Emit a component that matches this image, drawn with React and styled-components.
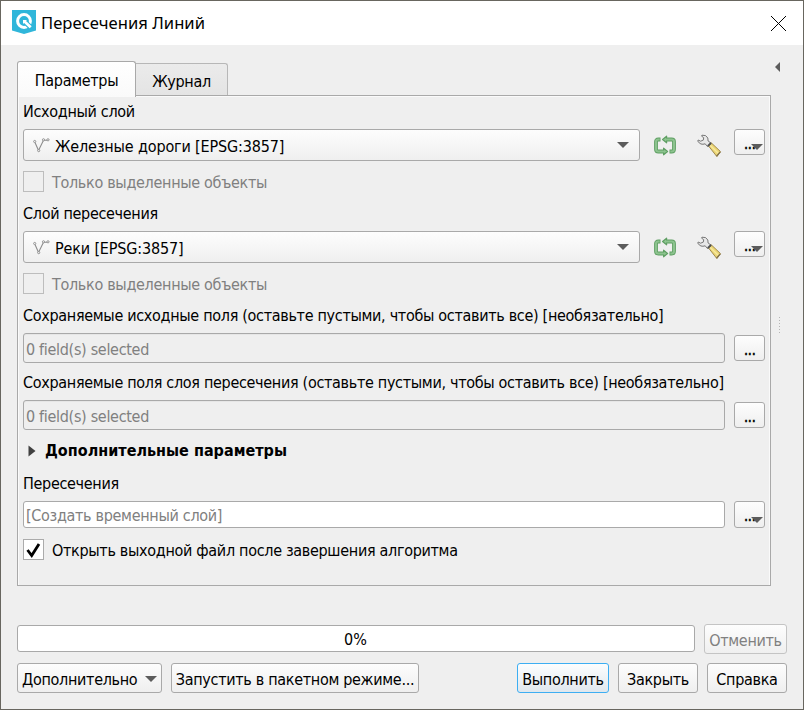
import React from 'react';
import styled, { createGlobalStyle } from 'styled-components';

const Global = createGlobalStyle`
  *, *::before, *::after { box-sizing: border-box; }
  body { margin: 0; }
  button { margin: 0; padding: 0; color: inherit; font: inherit; letter-spacing: inherit; }
`;

const Window = styled.div`
  display: flex;
  flex-direction: column;
  width: 804px;
  height: 710px;
  overflow: hidden;
  border: 1px solid #68665f;
  background: #efefef;
  color: #000;
  font: 16px/20px "DejaVu Sans Condensed", "DejaVu Sans", sans-serif;
  letter-spacing: -0.31px;
`;

const TitleBar = styled.header`
  display: flex;
  align-items: center;
  flex: none;
  height: 44px;
  padding: 0 16px 0 11px;
  background: #fff;
`;

const Logo = styled.svg`
  flex: none;
  margin-top: -2px;
`;

const Title = styled.h1`
  flex: 1;
  margin: 0 0 0 5px;
  font: 400 16.6px/22px "Noto Sans", sans-serif;
  letter-spacing: ${(p) => p.$tracking}px;
`;

const CloseIcon = styled.svg`
  display: block;
`;

const Body = styled.main`
  display: flex;
  height: 541px;
  padding: 16px 0 0 16px;
`;

const TabWidget = styled.section`
  width: 754px;
`;

const Tabs = styled.nav`
  display: flex;
  align-items: flex-end;
  height: 34px;
`;

const Tab = styled.button`
  position: relative;
  z-index: ${(p) => (p.$active ? 1 : 0)};
  width: ${(p) => p.$w}px;
  height: ${(p) => (p.$active ? 36 : 32)}px;
  margin-bottom: ${(p) => (p.$active ? -2 : 0)}px;
  padding-top: ${(p) => (p.$active ? 2 : 4)}px;
  border: 1px solid ${(p) => (p.$active ? '#a9a9a9' : '#b7b7b7')};
  border-bottom: 0;
  border-left-width: ${(p) => (p.$active ? 1 : 0)}px;
  border-radius: ${(p) => (p.$active ? '3px 3px 0 0' : '0 3px 0 0')};
  background: ${(p) => (p.$active ? 'linear-gradient(#fff, #fafafa)' : 'linear-gradient(#ebebeb, #e4e4e4)')};
`;

const Panel = styled.div`
  height: 491px;
  padding: 0 5px;
  border: 1px solid #a9a9a9;
  box-shadow: inset 1px 1px #fafafa, inset -1px 0 #fafafa;
`;

const Label = styled.div`
  height: 20px;
  margin-top: ${(p) => p.$top}px;
  white-space: nowrap;
`;

const Row = styled.div`
  display: flex;
  align-items: flex-start;
  height: ${(p) => p.$h}px;
  margin-top: ${(p) => p.$top}px;
`;

const raised = 'linear-gradient(#fdfdfd, #f6f6f6 50%, #efefef)';

const Combo = styled.div`
  display: flex;
  align-items: center;
  width: 617px;
  height: 32px;
  padding: 2px 10px 0 9px;
  border: 1px solid #a9a9a9;
  border-radius: 3px;
  background: ${raised};
`;

const ComboText = styled.span`
  flex: 1;
  padding-top: 2px;
  margin-left: 5px;
  letter-spacing: -0.15px;
`;

const Arrow = styled.svg`
  display: block;
  flex: none;
`;

const ComboArrow = styled(Arrow)`
  margin-top: -2px;
`;

const ToolIcon = styled.svg`
  flex: none;
  margin: ${(p) => p.$m};
`;

const Field = styled.div`
  width: 702px;
  height: ${(p) => p.$h}px;
  padding: ${(p) => (p.$h > 28 ? 6 : 4)}px 2px 0;
  border: 1px solid #a9a9a9;
  border-radius: 3px;
  background: ${(p) => (p.$white ? '#fff' : '#efefef')};
  box-shadow: ${(p) => (p.$white ? 'none' : 'inset 0 1px #e6e6e6')};
  color: #808080;
  white-space: nowrap;
`;

const BrowseButton = styled.button`
  position: relative;
  width: 31px;
  height: ${(p) => p.$h || 26}px;
  margin: ${(p) => p.$top || 0}px 0 0 auto;
  padding-top: 3px;
  border: 1px solid #a9a9a9;
  border-radius: 3px;
  background: ${raised};
  line-height: 18px;
  letter-spacing: -0.8px;
  -webkit-text-stroke: 0.3px #000;
`;

const MenuMark = styled(Arrow)`
  position: absolute;
  right: 1px;
  bottom: 4px;
`;

const CheckRow = styled.label`
  display: flex;
  align-items: center;
  height: 21px;
  margin-top: ${(p) => p.$top}px;
  color: ${(p) => (p.$off ? '#808080' : '#000')};
`;

const CheckText = styled.span`
  padding-top: 2px;
`;

const Box = styled.span`
  display: flex;
  align-items: center;
  justify-content: center;
  width: 21px;
  height: 21px;
  margin-right: 8px;
  border: 1px solid ${(p) => (p.$off ? '#bdbdbd' : '#ababab')};
  background: ${(p) => (p.$off ? '#efefef' : '#fff')};
`;

const Group = styled.div`
  display: flex;
  align-items: center;
  gap: 9px;
  height: 20px;
  margin-top: 11px;
  padding-left: 5px;
  font-weight: 700;
  letter-spacing: ${(p) => p.$tracking}px;
`;

const Rail = styled.aside`
  display: flex;
  flex-direction: column;
  align-items: center;
  width: 16px;
  padding-top: 1px;
`;

const Collapse = styled.svg`
  margin-right: 4px;
`;

const Grip = styled.div`
  width: 1px;
  height: 18px;
  margin: 245px 0 0 0;
  background: repeating-linear-gradient(#b5b5b5 0 1px, transparent 1px 3px);
`;

const Footer = styled.footer`
  display: flex;
  flex-direction: column;
  gap: 9px;
  padding: 38px 16px 0;
`;

const FooterRow = styled.div`
  display: flex;
  gap: 9px;
`;

const Progress = styled.div`
  width: 678px;
  height: 27px;
  margin-top: 1px;
  padding: 4px 1px 0 0;
  border: 1px solid #a9a9a9;
  border-radius: 3px;
  background: #fff;
  text-align: center;
  letter-spacing: 0;
`;

const Button = styled.button`
  display: flex;
  align-items: center;
  justify-content: ${(p) => (p.$menu ? 'space-between' : 'center')};
  width: ${(p) => p.$w}px;
  height: 30px;
  padding: 3px ${(p) => (p.$menu ? 4 : 0)}px 0;
  border: 1px solid ${(p) => (p.$primary ? '#3daef2' : p.disabled ? '#c4c4c4' : '#a9a9a9')};
  border-radius: 3px;
  background: ${(p) => (p.$primary ? 'linear-gradient(#fcfdfe, #eff3f6 50%, #e0e7ed)' : raised)};
  color: ${(p) => (p.disabled ? '#808080' : '#000')};
  white-space: nowrap;
`;

const Spacer = styled.div`
  flex: 1;
`;

const Down = ({ as: Shape = Arrow }) => (
  <Shape width="12" height="6" viewBox="0 0 12 6">
    <path d="M0 0h12L6 6z" fill="#5c5c5c" />
  </Shape>
);

const LineLayerIcon = () => (
  <svg width="17" height="16" viewBox="0 0 17 16" fill="#f5f5f5" stroke="#8c8c8c">
    <path d="M2 4.5 5.5 12.5 10.5 2.2h4" fill="none" strokeWidth="1.1" />
    <g strokeWidth=".9">
      <circle cx="1.7" cy="3.5" r="1.1" />
      <circle cx="5.7" cy="12.6" r="1.1" />
      <circle cx="10.5" cy="1.8" r="1.1" />
      <circle cx="15" cy="1.8" r="1.1" />
    </g>
  </svg>
);

const IterateIcon = () => (
  <ToolIcon $m="6px 0 0 14px" width="22" height="21" viewBox="0 -0.5 22 21">
    <g fill="none" strokeLinejoin="round">
      <path d="M6.5 4H4.3Q2 4 2 6.3v7.4q0 2.3 2.3 2.3H11M15.5 16h2.2q2.3 0 2.3-2.3V6.3q0-2.3-2.3-2.3H11" stroke="#5f9f63" strokeWidth="3.8" />
      <path d="m8.6 4 4-3.3v6.6zM13.6 16l-4-3.3v6.6z" fill="#8cc38e" stroke="#5f9f63" strokeWidth="1.2" />
      <path d="M5.7 4H4.3Q2 4 2 6.3v7.4q0 2.3 2.3 2.3H11M16.3 16h1.4q2.3 0 2.3-2.3V6.3q0-2.3-2.3-2.3H11" stroke="#8cc38e" strokeWidth="2" />
    </g>
  </ToolIcon>
);

const WrenchIcon = () => (
  <ToolIcon $m="5px 0 0 21px" width="25" height="24" viewBox="0 -0.3 25 24">
    <path d="m11 11 3-2.7 9.5 9-3.6 5z" fill="#ecd675" stroke="#a08a4e" strokeLinejoin="round" />
    <path d="m13 11 8.5 8.2" stroke="#f8eaa0" strokeWidth="1.3" />
    <path d="m19.5 21.8 3.8-4.2" stroke="#80704a" strokeWidth="1.4" />
    <path
      d="M5 .9Q9.3.3 10.8 3.7l.3 3 3 2.1-3.5 3.6-2.4-2.9Q3.4 11.2.8 6.8l.4-1.1 2.4 1.2 2.7-1.1.4-2.4-2.2-1.6z"
      fill="#e8e8e8"
      stroke="#777"
      strokeLinejoin="round"
    />
    <path d="m10.8 11.8 3.2-3.1" stroke="#515151" strokeWidth="2" />
  </ToolIcon>
);

const Browse = ({ menu, top, h }) => (
  <BrowseButton $top={top} $h={h} aria-label="...">
    ...
    {menu && <Down as={MenuMark} />}
  </BrowseButton>
);

const LayerRow = ({ name, top }) => (
  <Row $h={32} $top={top}>
    <Combo>
      <LineLayerIcon />
      <ComboText>{name}</ComboText>
      <Down as={ComboArrow} />
    </Combo>
    <IterateIcon />
    <WrenchIcon />
    <Browse menu />
  </Row>
);

const SelectedOnly = () => (
  <CheckRow $off $top={10}>
    <Box $off />
    <CheckText>Только выделенные объекты</CheckText>
  </CheckRow>
);

export default function App() {
  return (
    <>
      <Global />
      <Window>
        <TitleBar>
          <Logo width="24" height="24" viewBox="0 0 24 24">
            <path d="M0 0h24v20.5L12 24 0 20.5z" fill="#30b6da" />
            <circle cx="12" cy="11" r="6.4" fill="none" stroke="#fff" strokeWidth="3" />
            <path d="m12.3 11.3 7.5 7" stroke="#30b6da" strokeWidth="5" />
            <path d="m12 11 6.7 6.3" stroke="#fff" strokeWidth="2.8" />
            <path d="M11 14v-4h4z" fill="#fff" />
          </Logo>
          <Title $tracking={0.03}>Пересечения Линий</Title>
          <CloseIcon width="17" height="17" viewBox="0 0 17 17">
            <path d="m1 1 15 15M16 1 1 16" stroke="#000" strokeWidth="1.1" shapeRendering="crispEdges" />
          </CloseIcon>
        </TitleBar>
        <Body>
          <TabWidget>
            <Tabs>
              <Tab $active $w={119}>Параметры</Tab>
              <Tab $w={92}>Журнал</Tab>
            </Tabs>
            <Panel>
              <Label $top={6}>Исходный слой</Label>
              <LayerRow name="Железные дороги [EPSG:3857]" top={7} />
              <SelectedOnly />
              <Label $top={12}>Слой пересечения</Label>
              <LayerRow name="Реки [EPSG:3857]" top={7} />
              <SelectedOnly />
              <Label $top={12}>Сохраняемые исходные поля (оставьте пустыми, чтобы оставить все) [необязательно]</Label>
              <Row $h={30} $top={7}>
                <Field $h={30}>0 field(s) selected</Field>
                <Browse top={2} />
              </Row>
              <Label $top={10}>Сохраняемые поля слоя пересечения (оставьте пустыми, чтобы оставить все) [необязательно]</Label>
              <Row $h={30} $top={7}>
                <Field $h={30}>0 field(s) selected</Field>
                <Browse top={2} />
              </Row>
              <Group $tracking={0.02}>
                <svg width="8" height="12" viewBox="0 0 8 12">
                  <path d="M.5.5v11L7.5 6z" fill="#404040" />
                </svg>
                Дополнительные параметры
              </Group>
              <Label $top={13}>Пересечения</Label>
              <Row $h={27} $top={7}>
                <Field $white $h={27}>[Создать временный слой]</Field>
                <Browse menu h={27} />
              </Row>
              <CheckRow $top={11}>
                <Box>
                  <svg width="15" height="16" viewBox="0 0 15 16">
                    <path d="m1.5 8 4.2 5.5L13 2" fill="none" stroke="#000" strokeWidth="2.8" />
                  </svg>
                </Box>
                <CheckText>Открыть выходной файл после завершения алгоритма</CheckText>
              </CheckRow>
            </Panel>
          </TabWidget>
          <Rail>
            <Collapse width="5" height="10" viewBox="0 0 5 10">
              <path d="M5 0v10L0 5z" fill="#5c5c5c" />
            </Collapse>
            <Grip />
          </Rail>
        </Body>
        <Footer>
          <FooterRow>
            <Progress>0%</Progress>
            <Button $w={83} disabled>Отменить</Button>
          </FooterRow>
          <FooterRow>
            <Button $w={145} $menu>Дополнительно<Down as={ComboArrow} /></Button>
            <Button $w={248}>Запустить в пакетном режиме...</Button>
            <Spacer />
            <Button $w={92} $primary>Выполнить</Button>
            <Button $w={80}>Закрыть</Button>
            <Button $w={80}>Справка</Button>
          </FooterRow>
        </Footer>
      </Window>
    </>
  );
}
